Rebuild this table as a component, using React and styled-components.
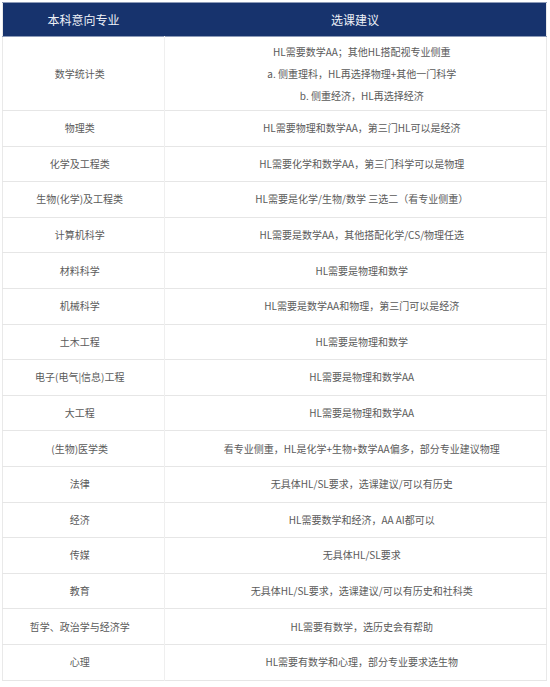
import React from 'react';
import styled, { createGlobalStyle } from 'styled-components';

const GlobalStyle = createGlobalStyle`
  html, body {
    margin: 0;
    padding: 0;
    background: #ffffff;
  }
  body {
    font-family: "Noto Sans CJK SC", "Noto Sans", "Liberation Sans", sans-serif;
  }
`;

const Page = styled.div`
  padding: 2px 3px 0 2px;
`;

const Table = styled.table`
  width: 545px;
  border-collapse: collapse;
  table-layout: fixed;
  border-left: 1px solid #e9e9e9;
  border-right: 1px solid #e9e9e9;
`;

const HeadRow = styled.tr`
  background: #17336d;
  border-top: 1px solid #8d9bb8;
  border-bottom: 1px solid #8d9bb8;
`;

const HeadCell = styled.th`
  height: 33px;
  padding: 0;
  font-size: 12px;
  font-weight: 400;
  color: #eef1f7;
  text-align: center;
  vertical-align: middle;
  width: ${props => props.width || 'auto'};
`;

const Row = styled.tr`
  border-bottom: 1px solid #e6e6e6;
`;

const Cell = styled.td`
  padding-top: ${props => (props.tall ? '3.5px' : '6.3px')};
  padding-bottom: ${props => (props.tall ? '3.5px' : '6.3px')};
  padding-left: 6px;
  padding-right: 13px;
  font-size: 10px;
  line-height: 22px;
  color: #5a5a5a;
  text-align: center;
  vertical-align: middle;
  & + & {
    border-left: 1px solid #efefef;
    padding-left: 19px;
    padding-right: 6px;
  }
`;

const Line = styled.div`
  white-space: nowrap;
`;

const rows = [
  {
    major: '数学统计类',
    advice: [
      'HL需要数学AA；其他HL搭配视专业侧重',
      'a. 侧重理科，HL再选择物理+其他一门科学',
      'b. 侧重经济，HL再选择经济',
    ],
  },
  { major: '物理类', advice: ['HL需要物理和数学AA，第三门HL可以是经济'] },
  { major: '化学及工程类', advice: ['HL需要化学和数学AA，第三门科学可以是物理'] },
  { major: '生物(化学)及工程类', advice: ['HL需要是化学/生物/数学 三选二（看专业侧重）'] },
  { major: '计算机科学', advice: ['HL需要是数学AA，其他搭配化学/CS/物理任选'] },
  { major: '材料科学', advice: ['HL需要是物理和数学'] },
  { major: '机械科学', advice: ['HL需要是数学AA和物理，第三门可以是经济'] },
  { major: '土木工程', advice: ['HL需要是物理和数学'] },
  { major: '电子(电气|信息)工程', advice: ['HL需要是物理和数学AA'] },
  { major: '大工程', advice: ['HL需要是物理和数学AA'] },
  { major: '(生物)医学类', advice: ['看专业侧重，HL是化学+生物+数学AA偏多，部分专业建议物理'] },
  { major: '法律', advice: ['无具体HL/SL要求，选课建议/可以有历史'] },
  { major: '经济', advice: ['HL需要数学和经济，AA AI都可以'] },
  { major: '传媒', advice: ['无具体HL/SL要求'] },
  { major: '教育', advice: ['无具体HL/SL要求，选课建议/可以有历史和社科类'] },
  { major: '哲学、政治学与经济学', advice: ['HL需要有数学，选历史会有帮助'] },
  { major: '心理', advice: ['HL需要有数学和心理，部分专业要求选生物'] },
];

export default function App() {
  return (
    <Page>
      <GlobalStyle />
      <Table>
        <thead>
          <HeadRow>
            <HeadCell width="161px">本科意向专业</HeadCell>
            <HeadCell>选课建议</HeadCell>
          </HeadRow>
        </thead>
        <tbody>
          {rows.map((row) => {
            const tall = row.advice.length > 1;
            return (
              <Row key={row.major}>
                <Cell tall={tall}>{row.major}</Cell>
                <Cell tall={tall}>
                  {row.advice.map((text) => (
                    <Line key={text}>{text}</Line>
                  ))}
                </Cell>
              </Row>
            );
          })}
        </tbody>
      </Table>
    </Page>
  );
}
